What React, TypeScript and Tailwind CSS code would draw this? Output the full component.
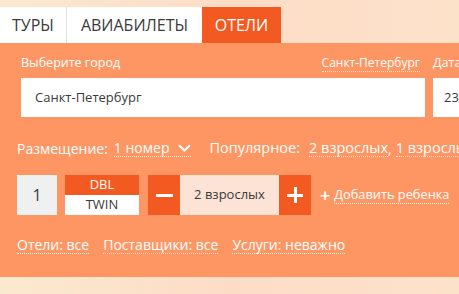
import React from 'react';

const font = { fontFamily: '"Open Sans", "Noto Sans", sans-serif' };

// Dotted-underlined link text used throughout the panel
const Dotted: React.FC<{ children: React.ReactNode; className?: string }> = ({ children, className = '' }) => (
  <span className={`border-b border-dotted border-white/80 leading-[17px] ${className}`}>{children}</span>
);

const App: React.FC = () => {
  return (
    <div
      className="w-[459px] h-[294px] overflow-hidden bg-gradient-to-r from-[#fbe9cf] via-[#fddcc6] to-[#fde2ca]"
      style={font}
    >
      {/* Tabs */}
      <div className="flex pt-[7px] h-[43px]">
        <div className="w-[67px] bg-white border-r border-[#e2e2e2] flex items-center justify-center text-[16px] text-[#3b3b3b]">
          ТУРЫ
        </div>
        <div className="w-[135px] bg-white flex items-center justify-center text-[16px] text-[#3b3b3b]">
          АВИАБИЛЕТЫ
        </div>
        <div className="w-[79px] bg-[#f25a21] flex items-center justify-center text-[16px] text-white">
          ОТЕЛИ
        </div>
      </div>

      {/* Search panel */}
      <div className="h-[234px] bg-[#fe9664] w-[600px] text-white">
        {/* City + date */}
        <div className="flex gap-[8px] pl-[21px] pt-[11px]">
          <div className="w-[404px] shrink-0">
            <div className="flex justify-between items-center h-[18px] text-[12.5px] font-medium pr-[5px]">
              <span>Выберите город</span>
              <Dotted className="text-[12px]">Санкт-Петербург</Dotted>
            </div>
            <div className="mt-[6px] h-[39px] bg-white flex items-center pl-[14px] text-[13px] text-[#3a3a3a]">
              Санкт-Петербург
            </div>
          </div>
          <div className="w-[150px] shrink-0">
            <div className="h-[18px] flex items-center text-[12.5px] font-medium">Дата</div>
            <div className="mt-[6px] h-[39px] bg-white flex items-center pl-[11px] text-[13px] text-[#3a3a3a]">
              23
            </div>
          </div>
        </div>

        {/* Placement */}
        <div className="flex items-center pl-[17px] mt-[21px] h-[20px] text-[14px] whitespace-nowrap">
          <span>Размещение:</span>
          <Dotted className="ml-[6px] inline-flex items-center">
            1 номер
            <svg className="ml-[9px]" width="13" height="8" viewBox="0 0 13 8" fill="none">
              <path d="M1 1.2L6.5 6.5L12 1.2" stroke="white" strokeWidth="2" />
            </svg>
          </Dotted>
          <span className="ml-[18px] text-[14.5px]">Популярное:</span>
          <Dotted className="ml-[9px] text-[14.5px]">2 взрослых</Dotted>
          <span>,</span>
          <Dotted className="ml-[4px] text-[14.5px]">1 взрослый</Dotted>
        </div>

        {/* Room configuration */}
        <div className="flex items-center pl-[17px] mt-[17px] h-[40px]">
          <div className="w-[40px] h-[40px] bg-[#eff0f0] flex items-center justify-center text-[16px] text-[#3a3a3a]">
            1
          </div>
          <div className="ml-[8px] w-[74px] h-[40px] flex flex-col text-[13px]">
            <div className="h-[20px] bg-[#f25a21] flex items-center justify-center text-white">DBL</div>
            <div className="h-[20px] bg-white flex items-center justify-center text-[#3a3a3a]">TWIN</div>
          </div>
          <div className="ml-[9px] flex h-[40px]">
            <div className="w-[32px] bg-[#f25a21] flex items-center justify-center">
              <div className="w-[17px] h-[3px] bg-white" />
            </div>
            <div className="w-[99px] bg-[#fde3d5] flex items-center justify-center text-[13px] text-[#3a3a3a]">
              2 взрослых
            </div>
            <div className="w-[32px] bg-[#f25a21] flex items-center justify-center relative">
              <div className="w-[16px] h-[3px] bg-white" />
              <div className="absolute w-[3px] h-[16px] bg-white" />
            </div>
          </div>
          <div className="ml-[9px] flex items-center text-[12.8px] whitespace-nowrap">
            <span className="text-[18px] leading-none mr-[4px] font-semibold">+</span>
            <Dotted>Добавить ребенка</Dotted>
          </div>
        </div>

        {/* Filters */}
        <div className="flex items-center pl-[17px] mt-[20px] h-[20px] text-[14px] gap-[14px] whitespace-nowrap">
          <Dotted>Отели: все</Dotted>
          <Dotted>Поставщики: все</Dotted>
          <Dotted>Услуги: неважно</Dotted>
        </div>
      </div>
    </div>
  );
};

export default App;
